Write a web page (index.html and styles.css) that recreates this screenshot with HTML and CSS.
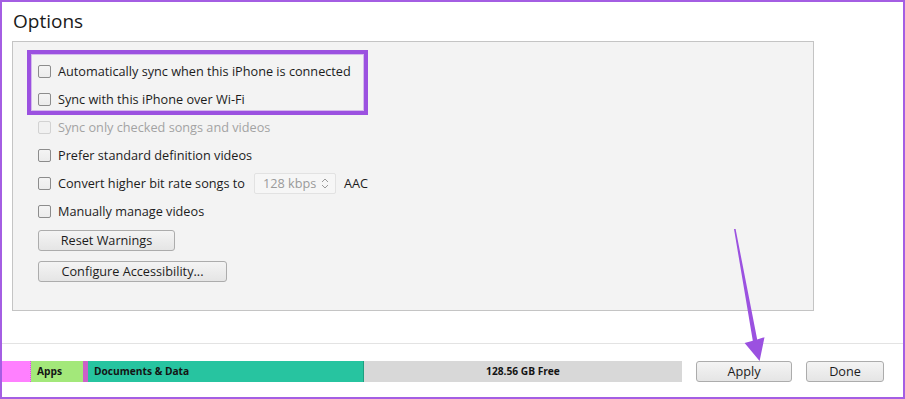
FILE: index.html
```html
<!DOCTYPE html>
<html>
<head>
<meta charset="utf-8">
<link rel="stylesheet" href="styles.css">
</head>
<body>
<div class="window">
  <h1 class="title">Options</h1>
  <div class="panel">
    <div class="row"><span class="cb"></span><span class="lbl">Automatically sync when this iPhone is connected</span></div>
    <div class="row"><span class="cb"></span><span class="lbl">Sync with this iPhone over Wi-Fi</span></div>
    <div class="row disabled"><span class="cb"></span><span class="lbl">Sync only checked songs and videos</span></div>
    <div class="row"><span class="cb"></span><span class="lbl">Prefer standard definition videos</span></div>
    <div class="row"><span class="cb"></span><span class="lbl">Convert higher bit rate songs to</span>
      <span class="select"><span class="sel-text">128 kbps</span>
        <svg class="chev" width="8" height="11" viewBox="0 0 8 11"><path d="M1 4 L4 1 L7 4 M1 7 L4 10 L7 7" fill="none" stroke="#9a9a9a" stroke-width="1"/></svg>
      </span>
      <span class="lbl aac">AAC</span></div>
    <div class="row"><span class="cb"></span><span class="lbl">Manually manage videos</span></div>
    <button class="btn btn-reset">Reset Warnings</button>
    <button class="btn btn-config">Configure Accessibility...</button>
  </div>
  <div class="sep"></div>
  <div class="footer">
    <div class="storage">
      <div class="seg seg-pink"></div>
      <div class="seg seg-apps">Apps</div>
      <div class="seg seg-mag"></div>
      <div class="seg seg-docs">Documents &amp; Data</div>
      <div class="seg seg-free">128.56 GB Free</div>
    </div>
    <button class="btn btn-apply">Apply</button>
    <button class="btn btn-done">Done</button>
  </div>
  <div class="highlight"></div>
  <svg class="arrow" width="905" height="399" viewBox="0 0 905 399">
    <polygon points="734,229 735.6,229 757.2,339.6 764.5,337.2 759.6,361 744.6,343 752.8,340.8" fill="#9b51e0"/>
  </svg>
</div>
</body>
</html>
```

FILE: styles.css
```css
html, body {
  margin: 0;
  padding: 0;
  background: #ffffff;
}

body {
  font-family: "Open Sans", "Noto Sans", sans-serif;
  color: #1c1c1c;
}

.window {
  box-sizing: border-box;
  width: 905px;
  height: 399px;
  border: 2px solid #a45ee3;
  position: relative;
  background: #ffffff;
  overflow: hidden;
}

.title {
  margin: 6px 0 0 11px;
  font-size: 19px;
  line-height: 26px;
  height: 26px;
  font-weight: 400;
  color: #1a1a1a;
}

.panel {
  box-sizing: border-box;
  margin: 7px 0 0 10px;
  width: 802px;
  height: 270px;
  border: 1px solid #c4c4c4;
  background: #f3f3f3;
  padding: 15px 0 0 25px;
}

.row {
  display: flex;
  align-items: center;
  height: 28px;
  font-size: 12.7px;
}

.cb {
  box-sizing: border-box;
  width: 13px;
  height: 13px;
  border: 1px solid #8c8c8c;
  border-radius: 2px;
  background: linear-gradient(#f4f4f4, #ececec);
  margin-right: 7px;
  flex: none;
}

.lbl {
  white-space: nowrap;
}

.disabled .cb {
  border-color: #d2d2d2;
  background: #f1f1f1;
}

.disabled .lbl {
  color: #a3a3a3;
}

.select {
  box-sizing: border-box;
  display: flex;
  align-items: center;
  justify-content: space-between;
  width: 82px;
  height: 21px;
  margin-left: 9px;
  padding: 0 6px 0 8px;
  border: 1px solid #e2e2e2;
  border-radius: 2px;
  background: #f6f6f6;
  color: #9a9a9a;
}

.chev {
  display: block;
}

.aac {
  margin-left: 8px;
}

.btn {
  box-sizing: border-box;
  display: block;
  height: 21px;
  padding: 0;
  border: 1px solid #acacac;
  border-radius: 3px;
  background: linear-gradient(#f4f4f4, #e5e5e5);
  font-family: "Open Sans", "Noto Sans", sans-serif;
  font-size: 12.7px;
  line-height: 19px;
  color: #1c1c1c;
  text-align: center;
}

.btn-reset {
  margin-top: 5px;
  width: 137px;
}

.btn-config {
  margin-top: 10px;
  width: 189px;
}

.sep {
  margin-top: 32px;
  height: 1px;
  background: #e3e3e3;
}

.footer {
  display: flex;
  margin-top: 17px;
  height: 21px;
}

.storage {
  display: flex;
  width: 680px;
  height: 21px;
  font-size: 10.2px;
  font-weight: 700;
  line-height: 21px;
  color: #141414;
}

.seg {
  box-sizing: border-box;
  height: 21px;
  white-space: nowrap;
}

.seg-pink {
  width: 29px;
  background: #ff80ff;
  border-right: 1px dotted #d060d0;
}

.seg-apps {
  width: 52px;
  background: #a3e87a;
  padding-left: 6px;
}

.seg-mag {
  width: 5px;
  background: #cc60c8;
}

.seg-docs {
  width: 276px;
  background: #27c4a0;
  border-right: 1px solid #1f9f80;
  padding-left: 6px;
}

.seg-free {
  width: 318px;
  background: #d8d8d8;
  text-align: center;
}

.btn-apply {
  margin-left: 14px;
  width: 96px;
}

.btn-done {
  margin-left: 14px;
  width: 78px;
}

.highlight {
  position: absolute;
  left: 25px;
  top: 48px;
  width: 341px;
  height: 65px;
  box-sizing: border-box;
  border: 4px solid #9b51e0;
  box-shadow: inset 0 0 0 1px rgba(155, 81, 224, 0.35);
}

.arrow {
  position: absolute;
  left: -2px;
  top: -2px;
  pointer-events: none;
}
```
